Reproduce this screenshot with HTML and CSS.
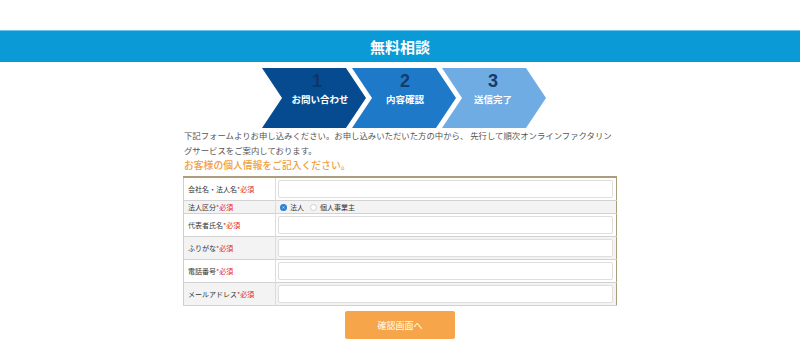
FILE: index.html
```html
<!DOCTYPE html>
<html lang="ja">
<head>
<meta charset="utf-8">
<title>無料相談</title>
<link rel="stylesheet" href="styles.css">
</head>
<body>
<header class="band"><h1 class="band-title">無料相談</h1></header>
<div class="steps">
  <svg class="steps-svg" width="284" height="60" viewBox="0 0 284 60">
    <polygon points="0,0 84,0 104,30 84,60 0,60 20,30" fill="#064b90"/>
    <polygon points="90,0 174,0 194,30 174,60 90,60 110,30" fill="#1f79c9"/>
    <polygon points="180,0 264,0 284,30 264,60 180,60 200,30" fill="#6eace3"/>
    <text class="num n1" x="55" y="19">1</text>
    <text class="lbl" x="58" y="35">お問い合わせ</text>
    <text class="num" x="143" y="19">2</text>
    <text class="lbl" x="143" y="35">内容確認</text>
    <text class="num" x="231" y="19">3</text>
    <text class="lbl" x="231" y="35">送信完了</text>
  </svg>
</div>
<main class="wrap">
  <p class="intro">下記フォームよりお申し込みください。お申し込みいただいた方の中から、 先行して順次オンラインファクタリングサービスをご案内しております。</p>
  <h2 class="lead">お客様の個人情報をご記入ください。</h2>
  <table class="form">
    <tr class="tall">
      <th>会社名・法人名<span class="req">*必須</span></th>
      <td><div class="box"></div></td>
    </tr>
    <tr class="alt short">
      <th>法人区分<span class="req">*必須</span></th>
      <td class="radio-cell"><div class="radios"><span class="radio on"></span><span class="rlabel">法人</span><span class="radio"></span><span class="rlabel">個人事業主</span></div></td>
    </tr>
    <tr class="tall">
      <th>代表者氏名<span class="req">*必須</span></th>
      <td><div class="box"></div></td>
    </tr>
    <tr class="alt tall">
      <th>ふりがな<span class="req">*必須</span></th>
      <td><div class="box"></div></td>
    </tr>
    <tr class="tall">
      <th>電話番号<span class="req">*必須</span></th>
      <td><div class="box"></div></td>
    </tr>
    <tr class="alt tall">
      <th>メールアドレス<span class="req">*必須</span></th>
      <td><div class="box"></div></td>
    </tr>
  </table>
  <div class="actions"><button class="submit" type="button">確認画面へ</button></div>
</main>
</body>
</html>
```
FILE: styles.css
```css
html, body {
  margin: 0;
  padding: 0;
  background: #fff;
}
body {
  font-family: "Noto Sans CJK JP", "Noto Sans", sans-serif;
  color: #333;
}
.band {
  margin-top: 30px;
  height: 32px;
  background: #0a9bd6;
  border-top: 1px solid #6cc6ee;
  box-sizing: border-box;
  display: flex;
  align-items: center;
  justify-content: center;
}
.band-title {
  margin: 0;
  color: #fff;
  font-size: 15px;
  font-weight: 700;
  line-height: 1;
}
.steps {
  display: flex;
  justify-content: center;
  padding-top: 6px;
  padding-left: 8px;
}
.steps-svg {
  display: block;
}
.num {
  font-family: "Liberation Sans", Arial, sans-serif;
  font-weight: 700;
  font-size: 18px;
  fill: #173a6c;
  text-anchor: middle;
}
.num.n1 {
  fill: #0d3766;
}
.lbl {
  font-family: "Noto Sans CJK JP", sans-serif;
  font-weight: 700;
  font-size: 9.5px;
  fill: #fff;
  text-anchor: middle;
}
.wrap {
  width: 434px;
  margin: 0 auto;
}
.intro {
  margin: 0;
  padding-left: 1px;
  font-size: 8.4px;
  line-height: 15px;
  color: #555;
}
.lead {
  margin: 0;
  padding-left: 1px;
  font-size: 9.8px;
  line-height: 14px;
  font-weight: 500;
  color: #f0a043;
}
.form {
  margin-top: 4px;
  width: 434px;
  border-collapse: collapse;
  border: 1px solid #cfcfcf;
  border-top: 2px solid #ab9d7e;
  border-right: 1px solid #ab9d7e;
}
.form tr {
  border-bottom: 1px solid #d2d2d2;
}
.form tr.alt {
  background: #f3f3f3;
}
.form tr.tall {
  height: 22px;
}
.form tr.short {
  height: 13px;
}
.form th {
  width: 87px;
  padding: 0 0 0 4px;
  text-align: left;
  font-weight: 400;
  font-size: 7px;
  line-height: 10px;
  color: #333;
  border-right: 1px solid #dcdcdc;
  white-space: nowrap;
}
.req {
  color: #e3261c;
}
.form td {
  padding: 2px 3px 2px 2px;
}
.form td.radio-cell {
  padding: 0 3px 0 2px;
}
.box {
  height: 16px;
  border: 1px solid #dedede;
  border-radius: 2px;
  background: #fff;
}
.radios {
  display: flex;
  align-items: center;
  height: 12px;
  font-size: 7px;
  line-height: 10px;
}
.radio {
  width: 7px;
  height: 7px;
  border-radius: 50%;
  border: 1px solid #d0d0d0;
  background: #fff;
  box-sizing: border-box;
  margin: 0 3px 0 2px;
}
.radio.on {
  border: 2px solid #2a7fd8;
  background: #fff;
  box-shadow: inset 0 0 0 1px #2a7fd8;
}
.rlabel {
  margin-right: 4px;
  color: #333;
}
.actions {
  display: flex;
  justify-content: center;
  padding-top: 5px;
}
.submit {
  width: 110px;
  height: 28px;
  border: 0;
  border-radius: 2px;
  background: #f6a54b;
  color: #fff;
  font-family: "Noto Sans CJK JP", sans-serif;
  font-size: 9px;
  padding: 0;
}
```
